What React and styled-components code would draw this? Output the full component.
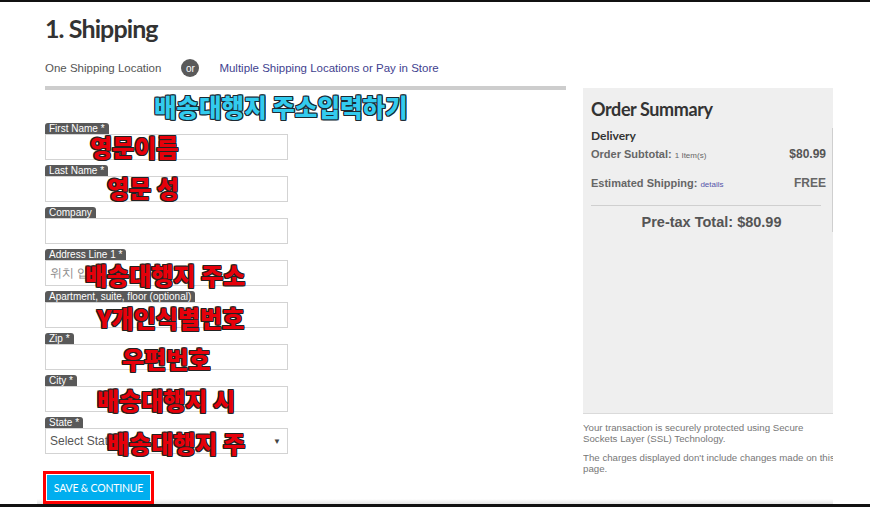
import React from 'react'
import styled, { createGlobalStyle } from 'styled-components'

const GlobalStyle = createGlobalStyle`
  html, body {
    margin: 0;
    padding: 0;
    background: #fff;
  }
  body {
    font-family: "Liberation Sans", Arial, sans-serif;
  }
`

const Frame = styled.div`
  height: 507px;
  box-sizing: border-box;
  border-top: 2px solid #111;
  border-bottom: 3px solid #111;
  overflow: hidden;
`
const Sheet = styled.div`
  margin-left: 37px;
  width: 796px;
  height: 100%;
  box-sizing: border-box;
  padding-left: 8px;
  background: linear-gradient(to bottom, #fff calc(100% - 5px), #e4e4e4);
`
const Heading = styled.h1`
  margin: 0;
  padding-top: 10px;
  font-family: Lato, "Noto Sans", sans-serif;
  font-weight: 700;
  font-size: 25px;
  line-height: 32px;
  color: #333;
  letter-spacing: -0.9px;
`
const Tabs = styled.div`
  display: flex;
  align-items: center;
  gap: 20px;
  height: 24px;
  margin-top: 12px;
  font-size: 11.5px;
`
const Tab = styled.span`
  color: ${p => (p.$link ? '#3f3f8f' : '#555')};
`
const Or = styled.span`
  width: 18px;
  height: 18px;
  border-radius: 50%;
  background: #5a5a5a;
  color: #fff;
  font-size: 10px;
  display: flex;
  align-items: center;
  justify-content: center;
`
const Columns = styled.div`
  display: flex;
  gap: 17px;
  margin-top: 6px;
`
const FormCol = styled.div`
  width: 521px;
`
const Divider = styled.div`
  height: 4px;
  background: #cdcdcd;
`
const Title = styled.div`
  height: 33px;
  line-height: 33px;
  padding-left: 109px;
  font-family: "Noto Sans CJK KR", sans-serif;
  font-weight: 900;
  font-size: 24.5px;
  color: #33cbee;
  text-shadow: 1px 0 #1b2a33, -1px 0 #1b2a33, 0 1px #1b2a33, 0 -1px #1b2a33,
    1px 1px #1b2a33, -1px -1px #1b2a33, 1px -1px #1b2a33, -1px 1px #1b2a33;
`
const Fields = styled.div`
  display: flex;
  flex-direction: column;
  gap: 5px;
`
const Field = styled.div`
  position: relative;
  width: 243px;
  display: flex;
  flex-direction: column;
  align-items: flex-start;
`
const Label = styled.div`
  height: 11px;
  line-height: 12px;
  padding: 0 4px;
  border-radius: 3px 3px 0 0;
  background: #595959;
  color: #fff;
  font-size: 10px;
  white-space: nowrap;
`
const Box = styled.div`
  width: 100%;
  height: 26px;
  box-sizing: border-box;
  border: 1px solid #d3d3d3;
  display: flex;
  align-items: center;
  justify-content: space-between;
  padding: 0 6px 0 4px;
  font-size: 12px;
  color: ${p => (p.$select ? '#555' : '#888')};
`
const Arrow = styled.span`
  font-size: 8px;
  color: #444;
`
const Note = styled.span`
  position: absolute;
  left: ${p => p.$x}px;
  top: ${p => p.$y}px;
  line-height: 26px;
  white-space: nowrap;
  font-family: "Noto Sans CJK KR", sans-serif;
  font-weight: 900;
  font-size: 24px;
  color: #e6000a;
  text-shadow: 1px 0 #222, -1px 0 #222, 0 1px #222, 0 -1px #222,
    1px 1px #222, -1px -1px #222, 1px -1px #222, -1px 1px #222;
`
const Highlight = styled.div`
  display: inline-block;
  margin: 17px 0 0 -2px;
  border: 3px solid #f00;
  padding: 1px;
`
const SaveButton = styled.button`
  display: block;
  width: 103px;
  height: 25px;
  border: none;
  background: #00aeef;
  color: #fff;
  font-family: Lato, "Noto Sans", sans-serif;
  font-size: 10.5px;
  letter-spacing: -0.2px;
  padding: 0;
  cursor: pointer;
`
const SideCol = styled.div`
  width: 250px;
  margin-top: 2px;
  overflow: hidden;
`
const Panel = styled.div`
  height: 326px;
  box-sizing: border-box;
  background: #efefef;
  border-bottom: 1px solid #dadada;
  padding-left: 8px;
  padding-top: 8px;
`
const PanelTitle = styled.div`
  font-family: Lato, "Noto Sans", sans-serif;
  font-weight: 700;
  font-size: 18px;
  line-height: 26px;
  letter-spacing: -0.4px;
  color: #333;
`
const SummaryBody = styled.div`
  border-right: 1px solid #cfcfcf;
  margin-top: 6px;
  padding-top: 1px;
`
const Delivery = styled.div`
  font-family: Lato, "Noto Sans", sans-serif;
  font-weight: 700;
  font-size: 12px;
  line-height: 14px;
  color: #333;
`
const Row = styled.div`
  display: flex;
  justify-content: space-between;
  align-items: baseline;
  padding-right: 6px;
  line-height: 16px;
  margin-top: ${p => p.$gap}px;
  font-size: 11px;
  font-weight: bold;
  color: #666;
`
const Small = styled.span`
  font-size: 8px;
  font-weight: normal;
  color: ${p => (p.$link ? '#55a' : '#666')};
`
const Amount = styled.span`
  font-size: 12px;
  color: ${p => (p.$muted ? '#666' : '#555')};
`
const Rule = styled.div`
  height: 1px;
  background: #cfcfcf;
  margin: 12px 11px 0 0;
`
const Total = styled.div`
  text-align: center;
  margin-top: 6px;
  line-height: 20px;
  font-size: 14.5px;
  font-weight: bold;
  color: #555;
`
const Fine = styled.p`
  margin: ${p => p.$gap}px 0 0;
  font-size: 9.7px;
  line-height: 11px;
  color: #777;
  white-space: nowrap;
`

const fields = [
  { label: 'First Name *', note: '영문이름', x: 45, y: 11 },
  { label: 'Last Name *', note: '영문 성', x: 62, y: 10 },
  { label: 'Company' },
  { label: 'Address Line 1 *', note: '배송대행지 주소', x: 40, y: 13, text: '위치 입' },
  { label: 'Apartment, suite, floor (optional)', note: 'Y개인식별번호', x: 52, y: 14 },
  { label: 'Zip *', note: '우편번호', x: 77, y: 13 },
  { label: 'City *', note: '배송대행지 시', x: 52, y: 12 },
  { label: 'State *', note: '배송대행지 주', x: 62, y: 13, text: 'Select State', select: true },
]

export default function App() {
  return (
    <>
      <GlobalStyle />
      <Frame>
        <Sheet>
          <Heading>1. Shipping</Heading>
          <Tabs>
            <Tab>One Shipping Location</Tab>
            <Or>or</Or>
            <Tab $link>Multiple Shipping Locations or Pay in Store</Tab>
          </Tabs>
          <Columns>
            <FormCol>
              <Divider />
              <Title>배송대행지 주소입력하기</Title>
              <Fields>
                {fields.map(f => (
                  <Field key={f.label}>
                    <Label>{f.label}</Label>
                    <Box $select={f.select}>
                      <span>{f.text}</span>
                      {f.select && <Arrow>▼</Arrow>}
                    </Box>
                    {f.note && <Note $x={f.x} $y={f.y}>{f.note}</Note>}
                  </Field>
                ))}
              </Fields>
              <Highlight>
                <SaveButton>SAVE &amp; CONTINUE</SaveButton>
              </Highlight>
            </FormCol>
            <SideCol>
              <Panel>
                <PanelTitle>Order Summary</PanelTitle>
                <SummaryBody>
                  <Delivery>Delivery</Delivery>
                  <Row $gap={3}>
                    <span>Order Subtotal: <Small>1 Item(s)</Small></span>
                    <Amount>$80.99</Amount>
                  </Row>
                  <Row $gap={11}>
                    <span>Estimated Shipping: <Small $link>details</Small></span>
                    <Amount $muted>FREE</Amount>
                  </Row>
                  <Rule />
                  <Total>Pre-tax Total: $80.99</Total>
                </SummaryBody>
              </Panel>
              <Fine $gap={8}>
                Your transaction is securely protected using Secure
                <br />
                Sockets Layer (SSL) Technology.
              </Fine>
              <Fine $gap={8}>
                The charges displayed don't include changes made on this
                <br />
                page.
              </Fine>
            </SideCol>
          </Columns>
        </Sheet>
      </Frame>
    </>
  )
}
